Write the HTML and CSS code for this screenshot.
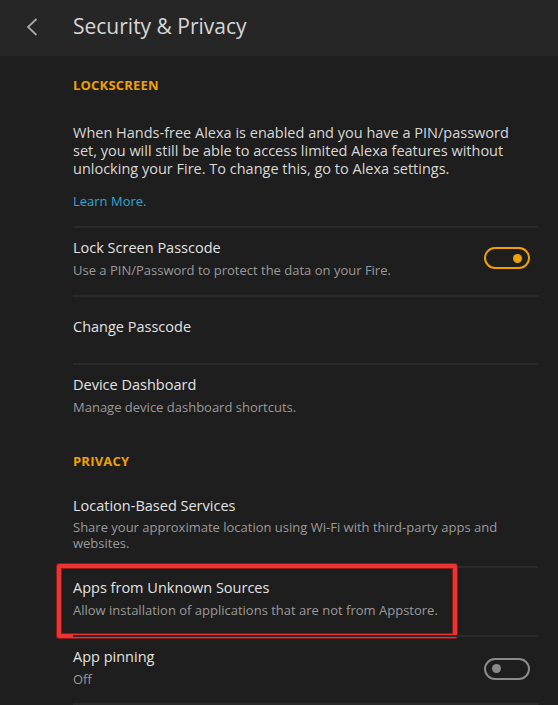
FILE: index.html
```html
<!DOCTYPE html>
<html lang="en">

<head>
    <title>Security &amp; Privacy</title>
    <meta charset="UTF-8">
    <meta name="viewport" content="width=device-width, initial-scale=1">
    <link rel="stylesheet" href="styles.css">
</head>

<body>
    <div class="topbar">
        <svg class="back" width="12" height="18" viewBox="0 0 12 18">
            <path d="M10.5 1 L2 9 L10.5 17" fill="none" stroke="#a8a8a8" stroke-width="1.8"/>
        </svg>
        <h1>Security &amp; Privacy</h1>
    </div>

    <div class="content">
        <div class="section-title first">LOCKSCREEN</div>
        <p class="note">When Hands-free Alexa is enabled and you have a PIN/password set, you will still be able to access limited Alexa features without unlocking your Fire. To change this, go to Alexa settings.</p>
        <a class="link" href="#">Learn More.</a>

        <div class="row">
            <div class="text">
                <div class="label">Lock Screen Passcode</div>
                <div class="sub">Use a PIN/Password to protect the data on your Fire.</div>
            </div>
            <div class="toggle on"><span></span></div>
        </div>
        <div class="row short">
            <div class="text">
                <div class="label">Change Passcode</div>
            </div>
        </div>
        <div class="row short">
            <div class="text">
                <div class="label">Device Dashboard</div>
                <div class="sub">Manage device dashboard shortcuts.</div>
            </div>
        </div>

        <div class="section-title">PRIVACY</div>
        <div class="row tall">
            <div class="text">
                <div class="label">Location-Based Services</div>
                <div class="sub">Share your approximate location using Wi-Fi with third-party apps and websites.</div>
            </div>
        </div>
        <div class="row">
            <div class="text">
                <div class="label">Apps from Unknown Sources</div>
                <div class="sub">Allow installation of applications that are not from Appstore.</div>
            </div>
            <div class="highlight"></div>
        </div>
        <div class="row short end">
            <div class="text">
                <div class="label">App pinning</div>
                <div class="sub">Off</div>
            </div>
            <div class="toggle"><span></span></div>
        </div>
    </div>
</body>

</html>
```

FILE: styles.css
```css
* {
    margin: 0;
    padding: 0;
    box-sizing: border-box;
}

body {
    background: #1e1e1e;
    font-family: "Open Sans", "Noto Sans", sans-serif;
    color: #dcdcdc;
    width: 558px;
    height: 705px;
    overflow: hidden;
}

.topbar {
    height: 56px;
    background: #262626;
    display: flex;
    align-items: center;
}

.topbar .back {
    margin-left: 26px;
    margin-right: 35px;
    margin-top: -2px;
}

.topbar h1 {
    font-size: 21px;
    font-weight: 400;
    color: #d6d6d6;
    margin-top: -4px;
}

.content {
    padding-left: 73px;
    padding-right: 20px;
}

.section-title {
    color: #f0a000;
    font-size: 13px;
    font-weight: 700;
    letter-spacing: 0.2px;
    height: 34px;
    line-height: 18px;
    padding-top: 21px;
}

.section-title.first {
    height: 68px;
    padding-top: 20px;
}

.note {
    width: 440px;
    font-size: 14.5px;
    line-height: 18px;
    color: #d8d8d8;
}

.link {
    display: block;
    color: #2ea6d6;
    font-size: 13px;
    text-decoration: none;
    margin-top: 14px;
    height: 34px;
}

.row {
    position: relative;
    border-top: 2px solid #2a2a2a;
    height: 69px;
    padding-bottom: 7px;
    display: flex;
    align-items: center;
    justify-content: space-between;
}

.row.short {
    height: 68px;
}

.row.tall {
    border-top: none;
    height: 101px;
    padding-top: 31px;
    padding-bottom: 0;
    align-items: flex-start;
}

.row.end {
    border-bottom: 2px solid #2a2a2a;
    height: 70px;
}

.label {
    font-size: 14.5px;
    color: #e2e2e2;
    line-height: 20px;
}

.sub {
    font-size: 13px;
    color: #9a9a9a;
    line-height: 16px;
    margin-top: 4px;
}

.tall .sub {
    margin-top: 3px;
}

.toggle {
    width: 46px;
    height: 22px;
    border: 2px solid #8a8a8a;
    border-radius: 11px;
    margin-right: 8px;
    display: flex;
    align-items: center;
    padding: 0 6px;
}

.toggle span {
    width: 9px;
    height: 9px;
    border-radius: 50%;
    background: #8a8a8a;
}

.toggle.on {
    border-color: #f0a000;
    justify-content: flex-end;
}

.toggle.on span {
    background: #f0a000;
}

.end .toggle {
    margin-top: 4px;
}

.highlight {
    position: absolute;
    left: -16px;
    top: -4px;
    width: 400px;
    height: 74px;
    border: 4px solid #ee3333;
    border-radius: 2px;
    box-shadow: 0 0 0 1px #8a1a1a, inset 0 0 0 1px #8a1a1a;
}
```
